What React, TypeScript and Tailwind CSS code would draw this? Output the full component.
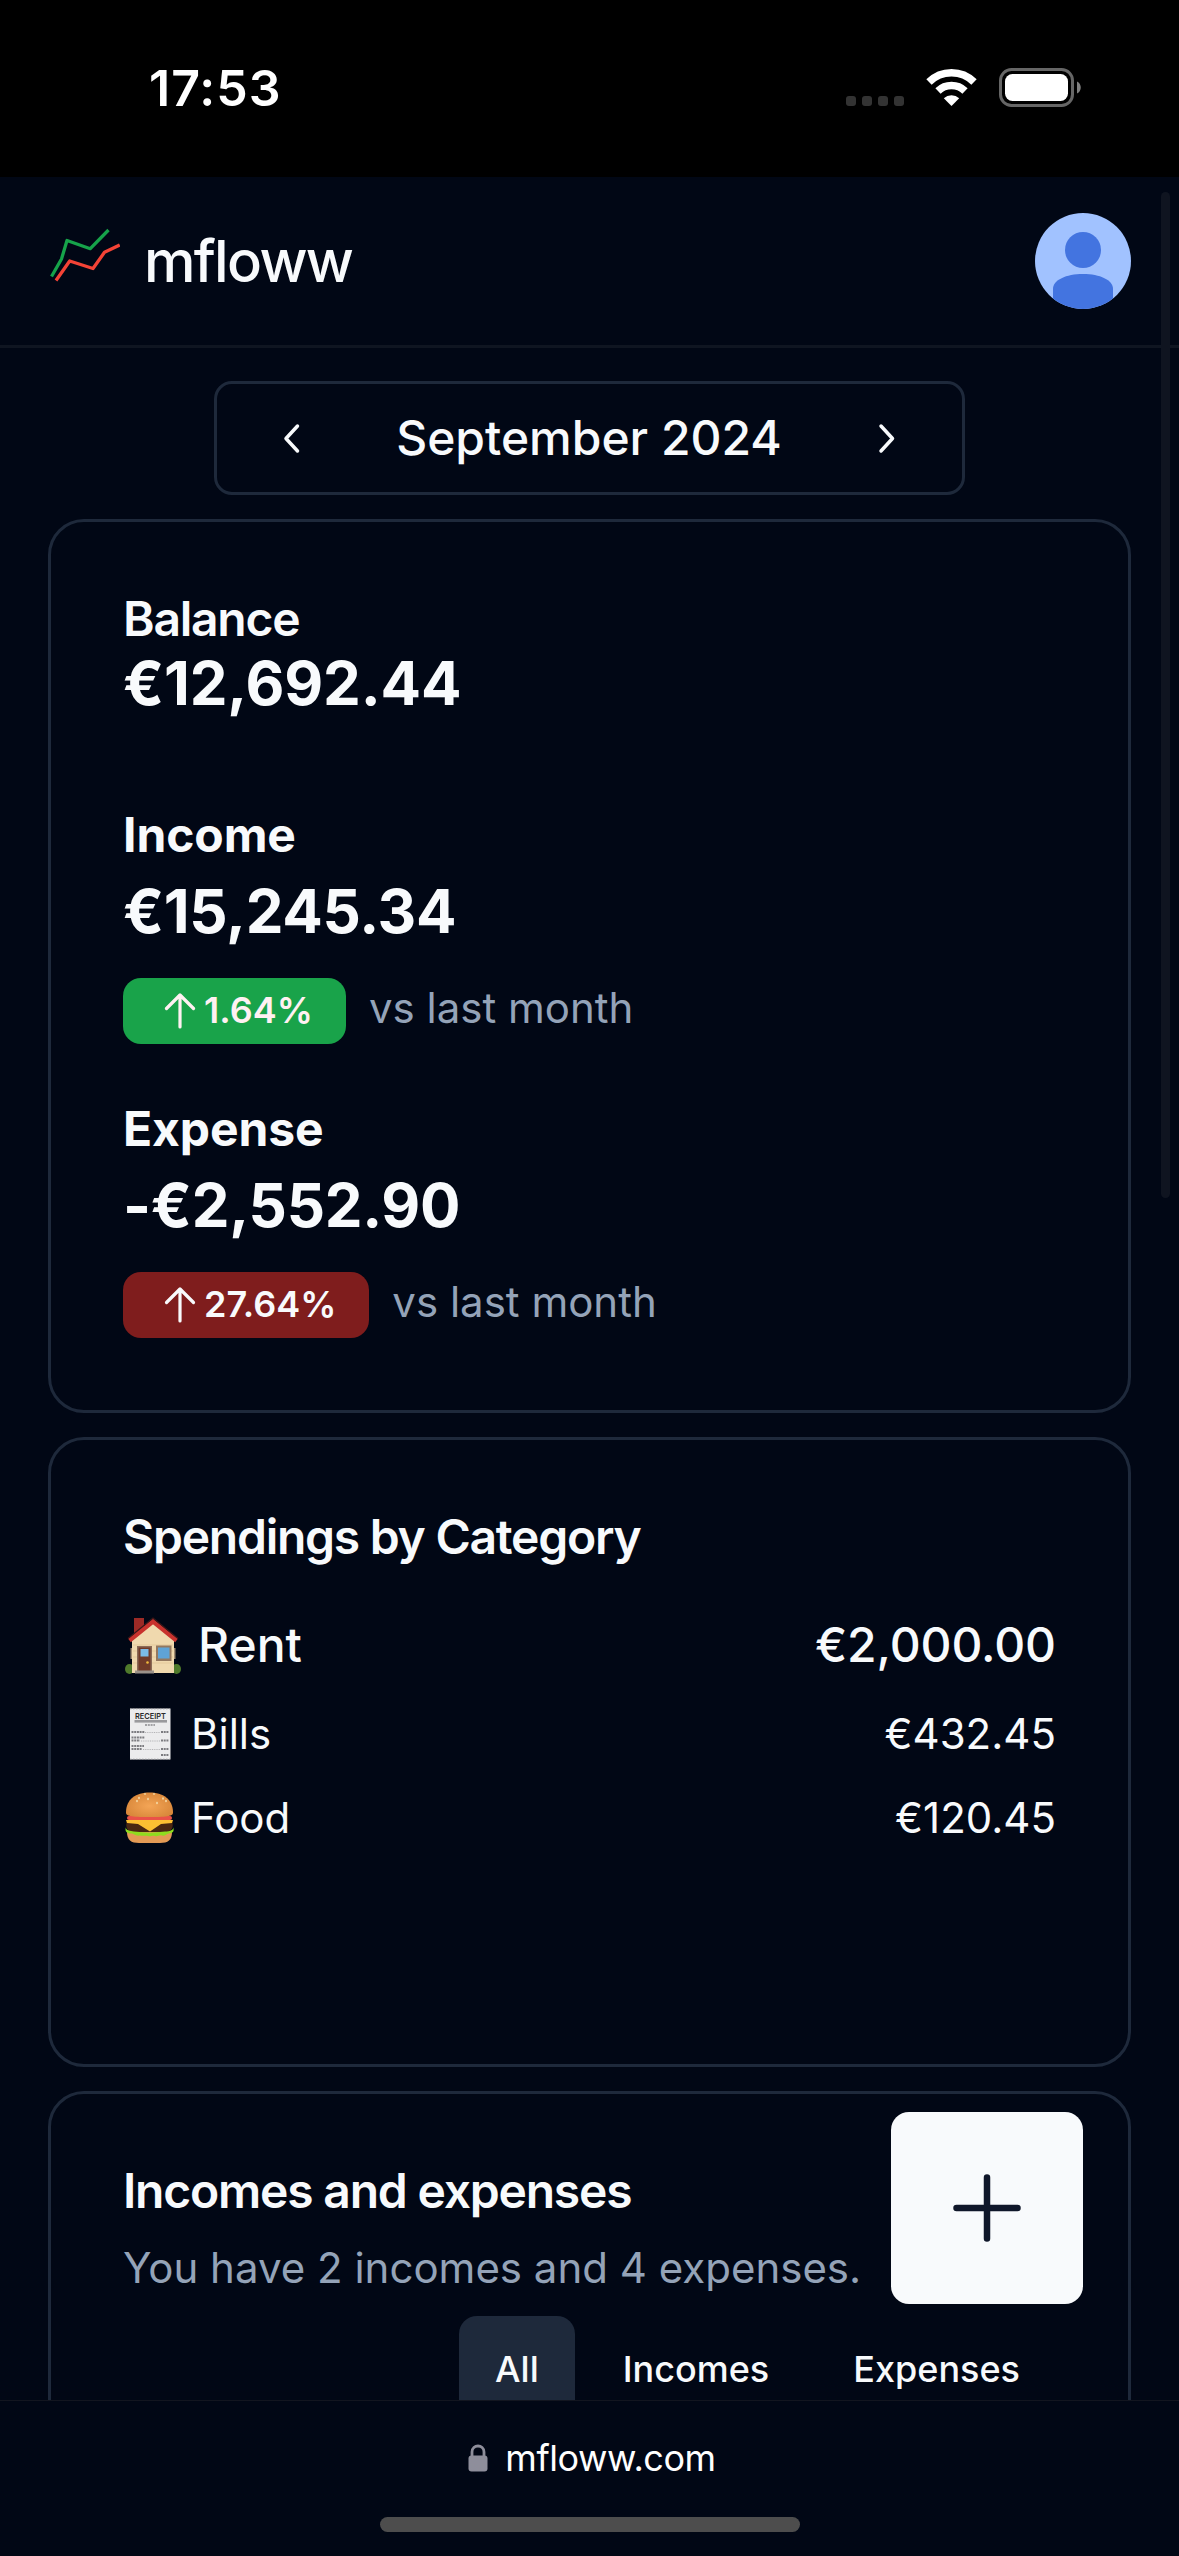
import type { ReactNode } from "react";

function StatusBar() {
  return (
    <div className="flex h-[177px] shrink-0 items-start justify-between bg-black pl-[149px] pr-[97px] pt-[58px]">
      <span className="text-[50px] font-semibold leading-[60px] tracking-[1px] text-white">17:53</span>
      <svg width="236" height="40" viewBox="846 68 236 40" className="mt-[10px]">
        {[846, 862, 878, 894].map((x) => (
          <rect key={x} x={x} y="96" width="10" height="10" rx="3" fill="#333" />
        ))}
        <g fill="none" stroke="#fff">
          <path d="M929 82 A32 32 0 0 1 974 82" strokeWidth="7.6" />
          <path d="M938 91 A19.5 19.5 0 0 1 965 91" strokeWidth="7.6" />
        </g>
        <path d="M943.8 98.2 A11.5 11.5 0 0 1 959.2 98.2 L951.5 106Z" fill="#fff" />
        <rect x="1000.5" y="69.5" width="72" height="36" rx="11" fill="none" stroke="#666" strokeWidth="3" />
        <rect x="1005" y="74" width="63" height="27" rx="7.5" fill="#fff" />
        <path d="M1077 81.5 C1082 83.500 1082 91.500 1077 93.500Z" fill="#808080" />
      </svg>
    </div>
  );
}

function Header() {
  return (
    <header className="flex h-[171px] shrink-0 items-center justify-between border-b-[3px] border-[#0f1521] px-12">
      <div className="flex items-center">
        <svg width="72" height="56" viewBox="48 227 72 56" fill="none" strokeWidth="3.3" strokeLinejoin="round" className="mb-3">
          <path d="M51.5 276.500 L61.500 259 L67 240.500 L90.300 248.700 L108.500 230" stroke="#16a34a" />
          <path d="M56 280.500 L69.700 261 L93 268.500 L104.500 252.300 L119.700 245" stroke="#f44336" />
        </svg>
        <span className="ml-[24px] text-[58px] font-medium leading-[84px] tracking-[-1.700px]">mfloww</span>
      </div>
      <svg width="96" height="96" viewBox="0 0 96 96">
        <clipPath id="avatar">
          <circle cx="48" cy="48" r="48" />
        </clipPath>
        <g clipPath="url(#avatar)">
          <rect width="96" height="96" fill="#a1c2ff" />
          <circle cx="48" cy="37" r="18" fill="#4374e0" />
          <path d="M18 96 V76 C18 67 31 61 48 61 S78 67 78 76 V96Z" fill="#4374e0" />
        </g>
      </svg>
    </header>
  );
}

function Chevron({ d }: { d: string }) {
  return (
    <svg width="48" height="48" viewBox="0 0 48 48" fill="none" stroke="#f8fafc" strokeWidth="3.5" strokeLinecap="round" strokeLinejoin="round">
      <path d={d} />
    </svg>
  );
}

function MonthPicker() {
  return (
    <div className="mx-auto flex h-[114px] w-[751px] shrink-0 items-center justify-between rounded-[18px] border-[3px] border-[#1e293b] px-[51px]">
      <Chevron d="M29.500 12 L18 24.500 L29.500 37" />
      <span className="-ml-px text-5xl font-medium leading-[72px]">September 2024</span>
      <Chevron d="M18 12 L29.500 24.500 L18 37" />
    </div>
  );
}

function Card({ className, children }: { className: string; children: ReactNode }) {
  return <section className={`flex shrink-0 flex-col rounded-[36px] border-[3px] border-[#1e293b] px-[72px] pt-[73px] ${className}`}>{children}</section>;
}

function Change({ value, color }: { value: string; color: string }) {
  return (
    <div className="mt-6 flex items-start gap-[23px]">
      <span className={`flex h-[66px] items-center rounded-[18px] px-[33px] text-4xl font-semibold leading-[48px] ${color}`}>
        <svg width="48" height="48" viewBox="0 0 48 48" fill="none" stroke="currentColor" strokeWidth="3.2" strokeLinecap="round" strokeLinejoin="round">
          <path d="M24 40 V8 M10.500 21.500 L24 8 L37.500 21.500" />
        </svg>
        <span className="-mt-0.5">{value}</span>
      </span>
      <span className="text-[42px] leading-[60px] text-[#94a3b8]">vs last month</span>
    </div>
  );
}

function HouseIcon() {
  return (
    <svg width="56" height="57" viewBox="0 0 56 57">
      <ellipse cx="4.500" cy="52" rx="4.500" ry="5" fill="#4f7a2b" />
      <ellipse cx="51.500" cy="52" rx="4.500" ry="5" fill="#4f7a2b" />
      <path d="M9 1 H19 V12 L9 22Z" fill="#9c2a26" />
      <path d="M7 23 L28 4 L49 23 V56 H7Z" fill="#f0d9ae" />
      <path d="M7 31 H5.500 V42 H7Z M49 31 H50.500 V42 H49Z" fill="#a08a70" />
      <path d="M8 28 H48 M8 34 H48 M8 40 H48 M8 46 H48" stroke="#e4c99b" strokeWidth="1" />
      <path d="M4.500 23.500 L28 4.500 L51.500 23.500" fill="none" stroke="#c8322d" strokeWidth="4.200" />
      <path d="M3 21.500 L28 1 L53 21.500" fill="none" stroke="#3b1718" strokeWidth="1.200" />
      <rect x="12" y="29" width="15" height="25" fill="#8b6b57" />
      <rect x="13.500" y="30.500" width="12" height="23.500" fill="#713a28" />
      <rect x="15.500" y="32" width="8" height="7.500" fill="#7bbbe6" />
      <circle cx="22.500" cy="45.500" r="1.300" fill="#f0b93c" />
      <rect x="31" y="28.500" width="15.500" height="15.500" fill="#94785f" />
      <rect x="33" y="30.500" width="11.500" height="11" fill="#5fa3d6" />
      <rect x="10" y="53.500" width="19" height="3" fill="#9b928a" />
    </svg>
  );
}

function ReceiptIcon() {
  return (
    <svg width="49" height="52" viewBox="0 0 49 52">
      <rect x="5" y="0.500" width="40.500" height="51" fill="#ececed" />
      <path d="M5 0.700 H45 M5 51.300 H45" stroke="#8a8a8e" strokeWidth="1.200" strokeDasharray="1.500 1.500" />
      <text x="25.500" y="10.800" textAnchor="middle" textLength="31" lengthAdjust="spacingAndGlyphs" fontSize="8" fontWeight="600" fill="#2a2a2a">
        RECEIPT
      </text>
      <rect x="9.500" y="12" width="32.500" height="2.600" fill="#9a9a9d" />
      <path d="M20 17 H30" stroke="#8b8b8e" strokeWidth="1.600" strokeDasharray="2 0.800" />
      <g stroke="#7c7c80" strokeWidth="1.800" strokeDasharray="2 0.700">
        <path d="M6.500 24 H20 M36 24 H44" />
        <path d="M6.500 29.500 H20 M6.500 32.500 H15 M36 32.500 H44" />
        <path d="M6.500 38 H19 M6.500 41 H17 M36 41 H44" />
        <path d="M36 47 H44" />
      </g>
      <path d="M20 24.500 H35 M16 33 H35 M18 41.500 H35" stroke="#a4a4a7" strokeWidth="0.800" strokeDasharray="1 0.800" />
    </svg>
  );
}

function BurgerIcon() {
  return (
    <svg width="49" height="52" viewBox="0 0 49 52">
      <defs>
        <radialGradient id="bun" cx="50%" cy="55%" r="60%">
          <stop offset="0" stopColor="#f4a556" />
          <stop offset="1" stopColor="#d68538" />
        </radialGradient>
      </defs>
      <path d="M2 40 H47 C47 48 43 51 35 51 H14 C6 51 2 48 2 40Z" fill="#e39a55" />
      <path d="M2 29 H47 C49 35 47 39 41 40 H8 C2 39 0 35 2 29Z" fill="#4a2712" />
      <path d="M1 35 C0 38 5 39 9 39.500 C20 41 30 41 40 39.500 C45 39 49 38 48 35 C50 40 47 41.500 44 41.500 C41 42 40 44.500 37 43.500 C34 42.500 33 45 30 44 C27 43 26 45 23 44 C20 43 18 44.500 15 43.500 C12 44 10 43 7 41.500 C3 41.500 -1 40 1 35Z" fill="#8fdc1f" />
      <path d="M1 28 H48 L47 31 L36 32 L25 39.500 L13 32 L2 31Z" fill="#fcbf32" />
      <rect x="2" y="24" width="45" height="4" rx="2" fill="#ea5248" />
      <path d="M1 20.500 C1 7 11 0.500 24.500 0.500 S48 7 48 20.500 C48 24 44 25 24.500 25 S1 24 1 20.500Z" fill="url(#bun)" />
      <g fill="#f6dfae">
        <ellipse cx="14" cy="6" rx="0.800" ry="1.200" />
        <ellipse cx="20" cy="2" rx="1.200" ry="0.800" />
        <ellipse cx="29" cy="2" rx="1.200" ry="0.800" />
        <ellipse cx="23" cy="7" rx="0.800" ry="1.200" />
        <ellipse cx="32" cy="11" rx="0.800" ry="1.200" />
        <ellipse cx="38" cy="6.500" rx="0.800" ry="1.200" />
        <ellipse cx="41" cy="9" rx="0.800" ry="1.200" />
        <ellipse cx="12" cy="9" rx="0.800" ry="1.200" />
      </g>
    </svg>
  );
}

const rows = [
  { name: "Bills", amount: "€432.45", icon: <ReceiptIcon /> },
  { name: "Food", amount: "€120.45", icon: <BurgerIcon /> },
];

export default function App() {
  return (
    <div className="relative flex h-[2556px] w-[1179px] flex-col overflow-hidden bg-[#010715] font-['Inter',sans-serif] text-[#f8fafc]">
      <StatusBar />
      <div className="flex min-h-0 flex-1 flex-col overflow-hidden">
        <Header />
        <main className="flex flex-col gap-6 px-12 pt-[33px]">
          <MonthPicker />

          <Card className="h-[894px]">
            <h2 className="text-5xl font-semibold leading-[48px] tracking-[-1.250px]">Balance</h2>
            <p className="-mt-0.5 text-6xl font-bold leading-[84px] tracking-[-0.150px]">€12,692.44</p>
            <h3 className="mt-[74px] text-5xl font-bold leading-[72px] tracking-[-0.100px]">Income</h3>
            <p className="-mt-0.5 text-6xl font-bold leading-[84px] tracking-[-0.300px]">€15,245.34</p>
            <div className="mt-px">
              <Change value="1.64%" color="bg-[#19a34a] text-[#fff1f2]" />
            </div>
            <h3 className="mt-[49px] text-5xl font-bold leading-[72px] tracking-[-0.100px]">Expense</h3>
            <p className="-mt-0.5 text-6xl font-bold leading-[84px] tracking-[-0.250px]">-€2,552.90</p>
            <div className="mt-px">
              <Change value="27.64%" color="bg-[#7f1d1d] text-[#f8fafc]" />
            </div>
          </Card>

          <Card className="h-[630px]">
            <h2 className="text-5xl font-semibold leading-[48px] tracking-[-1.250px]">Spendings by Category</h2>
            <div className="mt-12 flex h-[72px] items-center justify-between text-5xl font-medium leading-[72px]">
              <span className="flex items-center gap-[17px] pl-[2px]">
                <HouseIcon />
                Rent
              </span>
              <span className="tracking-[-0.100px]">€2,000.00</span>
            </div>
            <div className="-mt-px">
              {rows.map((row) => (
                <div key={row.name} className="mt-6 flex h-[60px] items-center justify-between text-[42px] leading-[60px]">
                  <span className="flex items-center gap-[17px] pl-[2px]">
                    {row.icon}
                    {row.name}
                  </span>
                  <span>{row.amount}</span>
                </div>
              ))}
            </div>
          </Card>

          <Card className="h-[600px]">
            <h2 className="text-5xl font-semibold leading-[48px] tracking-[-1.200px]">Incomes and expenses</h2>
            <p className="mt-[23px] text-[42px] leading-[60px] text-[#94a3b8]">You have 2 incomes and 4 expenses.</p>
            <div className="mt-[18px] flex justify-end gap-3 text-4xl font-medium leading-[48px]">
              <span className="h-[108px] rounded-[18px] bg-[#1e293b] px-9 py-[29px]">All</span>
              <span className="h-[108px] px-9 py-[29px]">Incomes</span>
              <span className="h-[108px] px-9 py-[29px]">Expenses</span>
            </div>
          </Card>
        </main>
      </div>

      <footer className="flex h-[156px] shrink-0 flex-col items-center border-t border-[#12151f]">
        <div className="mt-[33px] flex h-[48px] items-center pl-[5px]">
          <svg width="20" height="28" viewBox="0 0 20 28">
            <path d="M4 13 V8 C4 0 16 0 16 8 V13" fill="none" stroke="#8e8e9b" strokeWidth="2.800" />
            <rect x="0.500" y="11.500" width="19" height="16" rx="3" fill="#8e8e9b" />
          </svg>
          <span className="ml-[17px] text-4xl leading-[48px] tracking-[-0.450px] text-white">mfloww.com</span>
        </div>
        <div className="mt-[35px] h-[15px] w-[420px] rounded-full bg-[#4d4d4d]" />
      </footer>

      <button className="absolute left-[891px] top-[2112px] flex h-48 w-48 items-center justify-center rounded-[18px] bg-[#f8fafc]">
        <svg width="72" height="72" viewBox="0 0 72 72" stroke="#0f172a" strokeWidth="6.500" strokeLinecap="round">
          <path d="M36 5.500 V66.500 M5.500 36 H66.500" />
        </svg>
      </button>
      <div className="absolute left-[1161px] top-[192px] h-[1006px] w-[9px] rounded-full bg-[#0f1420]" />
    </div>
  );
}
